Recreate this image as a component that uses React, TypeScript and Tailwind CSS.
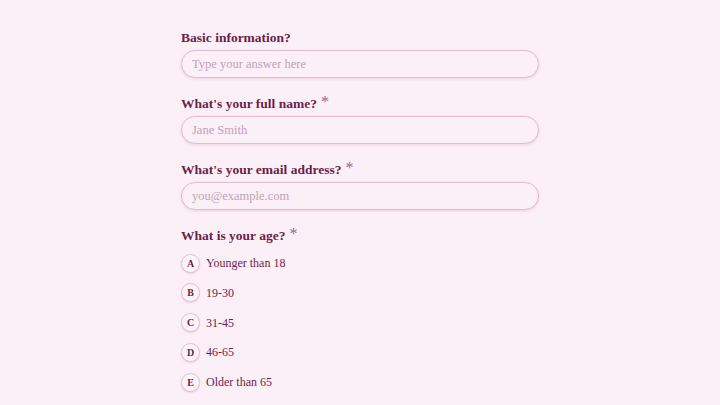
const font = { fontFamily: '"Liberation Serif", "DejaVu Serif", serif' }

const Label = ({ text, required }: { text: string; required?: boolean }) => (
  <div className="flex h-5 items-center text-[13.5px] font-bold leading-5 text-[#6a1f49]">
    <span>{text}</span>
    {required && (
      <span className="ml-[4px] -translate-y-[2px] text-[16px] font-normal text-[#a2628a]">*</span>
    )}
  </div>
)

const TextField = ({ placeholder }: { placeholder: string }) => (
  <input
    className="h-7 w-full rounded-full border border-[#dfbdd3] bg-[#fcf0f8] px-[10px] text-[12.5px] text-[#6a1f49] shadow-[0_1px_3px_rgba(150,80,120,0.18)] outline-none placeholder:text-[#c2a0b6]"
    placeholder={placeholder}
    style={font}
  />
)

const options = [
  { key: "A", label: "Younger than 18" },
  { key: "B", label: "19-30" },
  { key: "C", label: "31-45" },
  { key: "D", label: "46-65" },
  { key: "E", label: "Older than 65" },
]

export default function App() {
  return (
    <div className="flex h-[405px] w-[720px] justify-center overflow-hidden bg-[#fcf0f8] pt-7" style={font}>
      <div className="flex w-[358px] flex-col">
        <div className="flex flex-col gap-[2px]">
          <Label text="Basic information?" />
          <TextField placeholder="Type your answer here" />
        </div>
        <div className="mt-[16px] flex flex-col gap-[2px]">
          <Label text="What's your full name?" required />
          <TextField placeholder="Jane Smith" />
        </div>
        <div className="mt-[16px] flex flex-col gap-[2px]">
          <Label text="What's your email address?" required />
          <TextField placeholder="you@example.com" />
        </div>
        <div className="mt-[16px] flex flex-col">
          <Label text="What is your age?" required />
          <div className="mt-[7px] flex flex-col gap-[9.8px]">
            {options.map((o) => (
              <div key={o.key} className="flex h-5 items-center gap-[6px]">
                <span className="flex size-[19px] items-center justify-center rounded-full border border-[#e2c1d6] bg-[#fdf4fa] text-[10px] font-bold text-[#6a1f49] shadow-[0_1px_2px_rgba(150,80,120,0.2)]">
                  {o.key}
                </span>
                <span className="text-[12px] text-[#6a1f49]">{o.label}</span>
              </div>
            ))}
          </div>
        </div>
      </div>
    </div>
  )
}
